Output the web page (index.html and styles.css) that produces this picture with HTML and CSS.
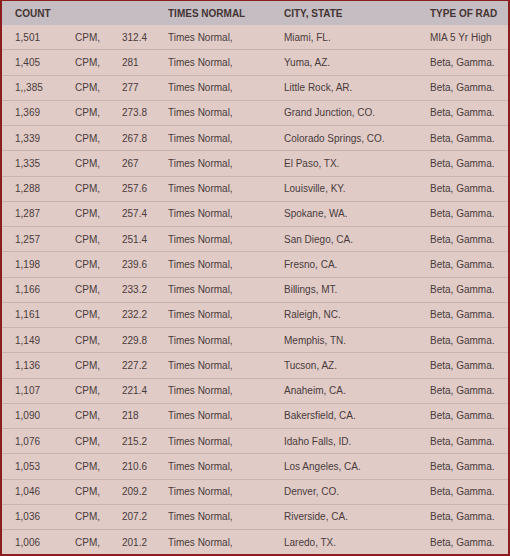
FILE: index.html
```html
<!DOCTYPE html>
<html lang="en">
<head>
    <meta charset="UTF-8">
    <title>Radiation Counts</title>
    <link rel="stylesheet" href="styles.css">
</head>
<body>
    <div class="rad-table">
        <div class="row head">
            <div>COUNT</div><div></div><div></div><div>TIMES NORMAL</div><div>CITY, STATE</div><div>TYPE OF RAD</div>
        </div>
        <div class="row"><div>1,501</div><div>CPM,</div><div>312.4</div><div>Times Normal,</div><div>Miami, FL.</div><div>MIA 5 Yr High</div></div>
        <div class="row"><div>1,405</div><div>CPM,</div><div>281</div><div>Times Normal,</div><div>Yuma, AZ.</div><div>Beta, Gamma.</div></div>
        <div class="row"><div>1,,385</div><div>CPM,</div><div>277</div><div>Times Normal,</div><div>Little Rock, AR.</div><div>Beta, Gamma.</div></div>
        <div class="row"><div>1,369</div><div>CPM,</div><div>273.8</div><div>Times Normal,</div><div>Grand Junction, CO.</div><div>Beta, Gamma.</div></div>
        <div class="row"><div>1,339</div><div>CPM,</div><div>267.8</div><div>Times Normal,</div><div>Colorado Springs, CO.</div><div>Beta, Gamma.</div></div>
        <div class="row"><div>1,335</div><div>CPM,</div><div>267</div><div>Times Normal,</div><div>El Paso, TX.</div><div>Beta, Gamma.</div></div>
        <div class="row"><div>1,288</div><div>CPM,</div><div>257.6</div><div>Times Normal,</div><div>Louisville, KY.</div><div>Beta, Gamma.</div></div>
        <div class="row"><div>1,287</div><div>CPM,</div><div>257.4</div><div>Times Normal,</div><div>Spokane, WA.</div><div>Beta, Gamma.</div></div>
        <div class="row"><div>1,257</div><div>CPM,</div><div>251.4</div><div>Times Normal,</div><div>San Diego, CA.</div><div>Beta, Gamma.</div></div>
        <div class="row"><div>1,198</div><div>CPM,</div><div>239.6</div><div>Times Normal,</div><div>Fresno, CA.</div><div>Beta, Gamma.</div></div>
        <div class="row"><div>1,166</div><div>CPM,</div><div>233.2</div><div>Times Normal,</div><div>Billings, MT.</div><div>Beta, Gamma.</div></div>
        <div class="row"><div>1,161</div><div>CPM,</div><div>232.2</div><div>Times Normal,</div><div>Raleigh, NC.</div><div>Beta, Gamma.</div></div>
        <div class="row"><div>1,149</div><div>CPM,</div><div>229.8</div><div>Times Normal,</div><div>Memphis, TN.</div><div>Beta, Gamma.</div></div>
        <div class="row"><div>1,136</div><div>CPM,</div><div>227.2</div><div>Times Normal,</div><div>Tucson, AZ.</div><div>Beta, Gamma.</div></div>
        <div class="row"><div>1,107</div><div>CPM,</div><div>221.4</div><div>Times Normal,</div><div>Anaheim, CA.</div><div>Beta, Gamma.</div></div>
        <div class="row"><div>1,090</div><div>CPM,</div><div>218</div><div>Times Normal,</div><div>Bakersfield, CA.</div><div>Beta, Gamma.</div></div>
        <div class="row"><div>1,076</div><div>CPM,</div><div>215.2</div><div>Times Normal,</div><div>Idaho Falls, ID.</div><div>Beta, Gamma.</div></div>
        <div class="row"><div>1,053</div><div>CPM,</div><div>210.6</div><div>Times Normal,</div><div>Los Angeles, CA.</div><div>Beta, Gamma.</div></div>
        <div class="row"><div>1,046</div><div>CPM,</div><div>209.2</div><div>Times Normal,</div><div>Denver, CO.</div><div>Beta, Gamma.</div></div>
        <div class="row"><div>1,036</div><div>CPM,</div><div>207.2</div><div>Times Normal,</div><div>Riverside, CA.</div><div>Beta, Gamma.</div></div>
        <div class="row last"><div>1,006</div><div>CPM,</div><div>201.2</div><div>Times Normal,</div><div>Laredo, TX.</div><div>Beta, Gamma.</div></div>
    </div>
</body>
</html>
```

FILE: styles.css
```css
body {
    margin: 0;
    font-family: "Liberation Sans", Arial, sans-serif;
    font-size: 10px;
    color: #4a3b3b;
    background: #e0cbc7;
}

.rad-table {
    width: 510px;
    height: 556px;
    box-sizing: border-box;
    border: 2px solid #8a1d1d;
    border-top-width: 1px;
    background: #e0cbc7;
    overflow: hidden;
}

.row {
    display: grid;
    grid-template-columns: 60px 47px 46px 116px 146px 91px;
    align-items: center;
    height: 25.25px;
    box-sizing: border-box;
    border-bottom: 1px solid #cbb3ae;
}

.row > div {
    padding-left: 13px;
    white-space: nowrap;
}

.row.head {
    height: 24px;
    background: #c5bdc1;
    border-bottom: none;
    font-weight: bold;
    color: #443434;
}

.row.last {
    border-bottom: none;
}
```
